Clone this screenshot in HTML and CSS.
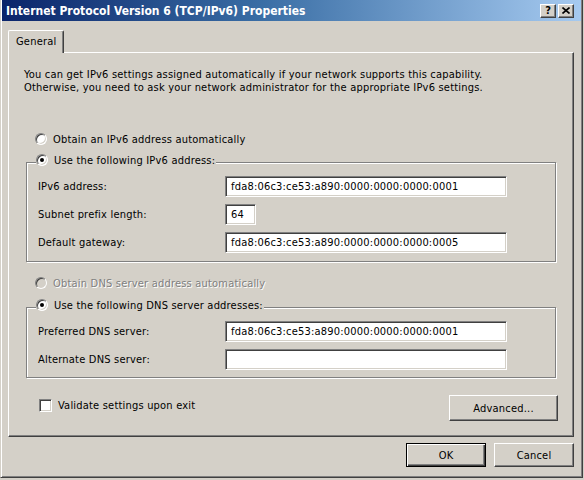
FILE: index.html
```html
<!DOCTYPE html>
<html>
<head>
<meta charset="utf-8">
<link rel="stylesheet" href="styles.css">
</head>
<body>
<div class="window">
  <div class="titlebar">
    <span class="title">Internet Protocol Version 6 (TCP/IPv6) Properties</span>
    <div class="caption-btns">
      <span class="cbtn help">?</span>
      <span class="cbtn close"><svg width="8" height="7" viewBox="0 0 8 7"><path d="M0.5 0.5 L7.5 6.5 M7.5 0.5 L0.5 6.5" stroke="#000" stroke-width="1.6" fill="none"/></svg></span>
    </div>
  </div>
  <div class="client">
    <div class="tabs"><div class="tab">General</div></div>
    <div class="panel">
      <p class="intro">You can get IPv6 settings assigned automatically if your network supports this capability.<br>Otherwise, you need to ask your network administrator for the appropriate IPv6 settings.</p>
      <div class="radio first"><span class="rb"></span>Obtain an IPv6 address automatically</div>
      <fieldset class="group">
        <legend><span class="radio"><span class="rb on"></span>Use the following IPv6 address:</span></legend>
        <div class="rows">
          <div class="row"><span class="lbl">IPv6 address:</span><span class="field wide">fda8:06c3:ce53:a890:0000:0000:0000:0001</span></div>
          <div class="row"><span class="lbl">Subnet prefix length:</span><span class="field short">64</span></div>
          <div class="row"><span class="lbl">Default gateway:</span><span class="field wide">fda8:06c3:ce53:a890:0000:0000:0000:0005</span></div>
        </div>
      </fieldset>
      <div class="radio disabled"><span class="rb"></span>Obtain DNS server address automatically</div>
      <fieldset class="group dns">
        <legend><span class="radio"><span class="rb on"></span>Use the following DNS server addresses:</span></legend>
        <div class="rows">
          <div class="row"><span class="lbl">Preferred DNS server:</span><span class="field wide">fda8:06c3:ce53:a890:0000:0000:0000:0001</span></div>
          <div class="row"><span class="lbl">Alternate DNS server:</span><span class="field wide"></span></div>
        </div>
      </fieldset>
      <div class="bottom-row">
        <div class="check"><span class="cb"></span>Validate settings upon exit</div>
        <span class="btn advanced">Advanced...</span>
      </div>
    </div>
    <div class="dlg-buttons">
      <span class="btn default">OK</span>
      <span class="btn">Cancel</span>
    </div>
  </div>
</div>
</body>
</html>
```
FILE: styles.css
```css
* { box-sizing: border-box; }
html, body { margin: 0; padding: 0; background: #d4d0c8; }
body {
  width: 584px; height: 480px; overflow: hidden;
  font-family: "DejaVu Sans Condensed", "DejaVu Sans", sans-serif;
  font-stretch: condensed;
  font-size: 11px; color: #000;
  letter-spacing: 0.2px;
}
.window {
  width: 583px; height: 478px;
  background: #d4d0c8;
  border-style: solid; border-width: 0 1px 1px 1px;
  border-color: #d4d0c8 #404040 #404040 #d4d0c8;
  box-shadow: inset 1px 0 #fff, inset -1px -1px #808080;
  padding: 0 1px 1px 1px;
  display: flex; flex-direction: column;
}
.titlebar {
  height: 21px; flex: none;
  background: linear-gradient(90deg, #0a246a 0%, #3a6ea5 45%, #a6caf0 100%);
  display: flex; align-items: center;
  padding: 0 7px 0 4px;
}
.title { flex: 1; color: #fff; font-weight: bold; font-size: 12px; letter-spacing: 0; white-space: nowrap; }
.caption-btns { display: flex; gap: 2px; }
.cbtn {
  width: 16px; height: 14px;
  background: #d4d0c8;
  border: 1px solid; border-color: #fff #404040 #404040 #fff;
  box-shadow: inset -1px -1px #808080;
  display: flex; align-items: center; justify-content: center;
  font-weight: bold; font-size: 11px; line-height: 1; letter-spacing: 0;
}
.client { flex: 1; padding: 9px 7px 0 6px; display: flex; flex-direction: column; }
.tabs { display: flex; height: 22px; flex: none; }
.tab {
  position: relative; z-index: 1;
  width: 56px; height: 23px; margin-bottom: -1px;
  background: #d4d0c8;
  border-top: 1px solid #fff; border-left: 1px solid #fff; border-right: 1px solid #404040;
  box-shadow: inset -1px 0 #808080;
  border-top-left-radius: 2px; border-top-right-radius: 2px;
  padding-left: 7px; line-height: 21px;
}
.panel {
  width: 566px;
  border: 1px solid; border-color: #fff #404040 #404040 #fff;
  box-shadow: inset -1px -1px #808080;
  padding: 15px;
  display: flex; flex-direction: column;
}
.intro { margin: 0; line-height: 13px; white-space: nowrap; }
.radio { display: flex; align-items: center; height: 14px; white-space: nowrap; }
.radio.first { margin: 38px 0 7px 11px; }
.radio.disabled { margin: 14px 0 8px 11px; color: #808080; text-shadow: 1px 1px 0 #fff; }
.rb {
  position: relative; flex: none;
  width: 12px; height: 12px; margin-right: 6px;
  border-radius: 50%; background: #fff;
  border: 1px solid; border-color: #808080 #fff #fff #808080;
  box-shadow: inset 1px 1px #404040, inset -1px -1px #d4d0c8;
}
.radio.disabled .rb { background: #d4d0c8; }
.rb.on::after {
  content: ""; position: absolute; left: 3px; top: 3px;
  width: 4px; height: 4px; border-radius: 50%; background: #000;
}
.group {
  margin: 0 2px; padding: 0; min-width: 0;
  border: 1px solid #808080;
  box-shadow: 1px 1px #fff, inset 1px 1px #fff;
}
.group legend { margin-left: 9px; padding: 0 1px 4px 0; background: #d4d0c8; }
.rows { padding: 5px 0 8px 11px; display: flex; flex-direction: column; gap: 7px; }
.dns .rows { padding-bottom: 7px; }
.row { display: flex; align-items: center; height: 21px; }
.lbl { width: 187px; flex: none; white-space: nowrap; }
.field {
  height: 21px; background: #fff;
  border: 1px solid; border-color: #808080 #fff #fff #808080;
  box-shadow: inset 1px 1px #404040, inset -1px -1px #d4d0c8;
  padding: 0 5px; line-height: 19px; white-space: nowrap;
}
.field.wide { width: 282px; }
.field.short { width: 31px; }
.bottom-row { display: flex; justify-content: space-between; align-items: flex-start; margin-top: 17px; }
.check { display: flex; align-items: center; height: 14px; margin: 3px 0 0 15px; }
.cb {
  width: 13px; height: 13px; margin-right: 6px; background: #fff;
  border: 1px solid; border-color: #808080 #fff #fff #808080;
  box-shadow: inset 1px 1px #404040, inset -1px -1px #d4d0c8;
}
.btn {
  display: flex; align-items: center; justify-content: center;
  width: 80px; height: 24px;
  background: #d4d0c8;
  border: 1px solid; border-color: #fff #404040 #404040 #fff;
  box-shadow: inset -1px -1px #808080;
}
.btn.advanced { width: 109px; height: 26px; }
.btn.default {
  border-color: #000;
  box-shadow: inset 1px 1px #fff, inset -1px -1px #404040, inset -2px -2px #808080;
}
.dlg-buttons { display: flex; justify-content: flex-end; gap: 8px; margin-top: 6px; }
```
